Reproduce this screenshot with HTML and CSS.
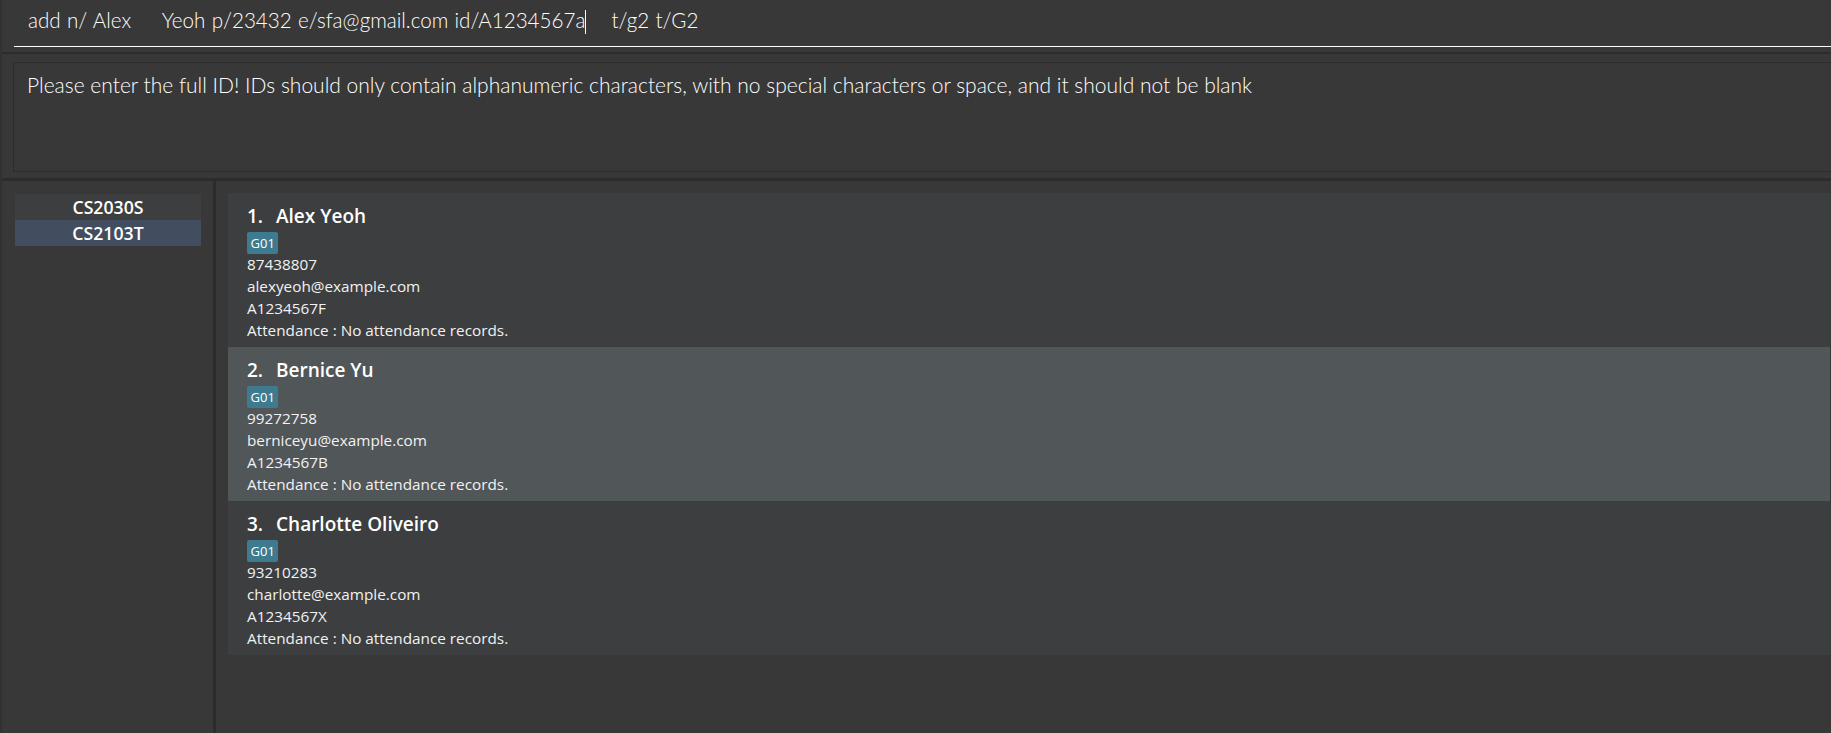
FILE: index.html
```html
<!DOCTYPE html>
<html lang="en">
<head>
<meta charset="utf-8">
<title>Address App</title>
<link rel="stylesheet" href="styles.css">
</head>
<body>
<div class="app">
  <div class="cmd-area">
    <div class="cmd-field"><span class="cmd-text">add n/ Alex     Yeoh p/23432 e/sfa@gmail.com id/A1234567a</span><span class="caret"></span><span class="cmd-text">    t/g2 t/G2</span></div>
  </div>
  <div class="result-area">
    <div class="result-box">Please enter the full ID! IDs should only contain alphanumeric characters, with no special characters or space, and it should not be blank</div>
  </div>
  <div class="main">
    <aside class="modules">
      <ul class="module-list">
        <li class="module">CS2030S</li>
        <li class="module selected">CS2103T</li>
      </ul>
    </aside>
    <section class="persons">
      <div class="card even">
        <div class="name-row"><span class="idx">1. </span><span class="name">Alex Yeoh</span></div>
        <div class="tags"><span class="tag">G01</span></div>
        <div class="line">87438807</div>
        <div class="line">alexyeoh@example.com</div>
        <div class="line">A1234567F</div>
        <div class="line">Attendance : No attendance records.</div>
      </div>
      <div class="card odd">
        <div class="name-row"><span class="idx">2. </span><span class="name">Bernice Yu</span></div>
        <div class="tags"><span class="tag">G01</span></div>
        <div class="line">99272758</div>
        <div class="line">berniceyu@example.com</div>
        <div class="line">A1234567B</div>
        <div class="line">Attendance : No attendance records.</div>
      </div>
      <div class="card even">
        <div class="name-row"><span class="idx">3. </span><span class="name">Charlotte Oliveiro</span></div>
        <div class="tags"><span class="tag">G01</span></div>
        <div class="line">93210283</div>
        <div class="line">charlotte@example.com</div>
        <div class="line">A1234567X</div>
        <div class="line">Attendance : No attendance records.</div>
      </div>
    </section>
  </div>
</div>
</body>
</html>
```
FILE: styles.css
```css
html, body {
  margin: 0;
  padding: 0;
  background: #383838;
  overflow: hidden;
}
.app {
  width: 1831px;
  height: 733px;
  display: flex;
  flex-direction: column;
  background: #383838;
  color: #ffffff;
  box-sizing: border-box;
  border-left: 2px solid #323232;
}
.cmd-area {
  height: 52px;
  flex: none;
  padding-left: 12px;
  border-bottom: 2px solid #2c2c2c;
}
.cmd-field {
  box-sizing: border-box;
  height: 47px;
  border-bottom: 1px solid #ffffff;
  padding: 8px 0 0 14px;
  font-family: "Lato", "Liberation Sans", sans-serif;
  font-weight: 300;
  font-size: 20.6px;
  line-height: 25px;
  word-spacing: 0.7px;
  white-space: pre;
  color: #ffffff;
}
.caret {
  display: inline-block;
  width: 1px;
  height: 24px;
  background: #ffffff;
  vertical-align: -6px;
}
.result-area {
  flex: none;
  height: 127px;
  box-sizing: border-box;
  padding: 8px 0 6px 11px;
  border-bottom: 3px solid #2c2c2c;
}
.result-box {
  box-sizing: border-box;
  height: 110px;
  border: 1px solid #2c2c2c;
  border-right: none;
  padding: 9px 0 0 13px;
  font-family: "Lato", "Liberation Sans", sans-serif;
  font-weight: 300;
  font-size: 21px;
  line-height: 25px;
  color: #ffffff;
  white-space: nowrap;
}
.main {
  flex: 1;
  display: flex;
  min-height: 0;
}
.modules {
  width: 198px;
  flex: none;
  border-right: 3px solid #2c2c2c;
  padding: 13px 0 0 13px;
  box-sizing: content-box;
}
.module-list {
  list-style: none;
  margin: 0;
  padding: 0;
  width: 186px;
}
.module {
  height: 26px;
  line-height: 26px;
  text-align: center;
  font-family: "Open Sans", "Liberation Sans", sans-serif;
  font-weight: 600;
  font-size: 17.7px;
  color: #ffffff;
  background: #3c3e3f;
}
.module.selected {
  background: #424d5f;
}
.persons {
  flex: 1;
  padding: 12px 1px 0 12px;
  display: flex;
  flex-direction: column;
}
.card {
  height: 154px;
  flex: none;
  box-sizing: border-box;
  padding: 10px 0 6px 19px;
  font-family: "Open Sans", "Liberation Sans", sans-serif;
  color: #ffffff;
}
.card.even { background: #3c3e3f; }
.card.odd { background: #515658; }
.name-row {
  display: flex;
  gap: 8px;
  font-weight: 600;
  font-size: 19px;
  line-height: 26px;
  height: 26px;
}
.idx { white-space: pre; }
.tags {
  display: flex;
  margin: 3px 0 -1px;
  height: 22px;
}
.tag {
  box-sizing: border-box;
  height: 22px;
  padding: 2px 3.5px;
  font-size: 13px;
  line-height: 18px;
  background: #3e7b91;
  color: #ffffff;
  border-radius: 2px;
}
.line {
  font-size: 15.3px;
  line-height: 22px;
  height: 22px;
  color: #f2f2f2;
}
```
